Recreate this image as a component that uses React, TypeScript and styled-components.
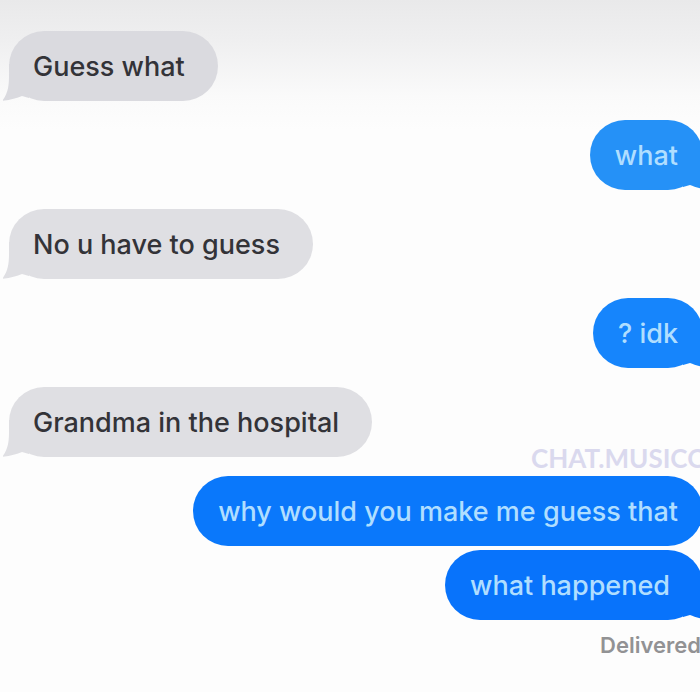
import React from "react";
import styled, { createGlobalStyle } from "styled-components";

const GlobalStyle = createGlobalStyle`
  body {
    margin: 0;
    background: #fdfdfd;
    font-family: Inter, "Liberation Sans", sans-serif;
  }
`;

type Side = "in" | "out";

const Screen = styled.main`
  position: relative;
  box-sizing: border-box;
  min-height: 100vh;
  padding-top: 31px;
  overflow: hidden;
  background: linear-gradient(#e9e9ea 0, #efeff0 40px, #fafafa 96px, #fdfdfd 130px);
`;

const Thread = styled.ol`
  display: flex;
  flex-direction: column;
  margin: 0 -3px 0 9px;
  padding: 0;
  list-style: none;
`;

const Row = styled.li<{ $side: Side; $grouped?: boolean }>`
  display: flex;
  justify-content: ${(p) => (p.$side === "in" ? "flex-start" : "flex-end")};
  margin-top: ${(p) => (p.$grouped ? 4 : 19)}px;

  &:first-child {
    margin-top: 0;
  }
`;

const Bubble = styled.div<{ $side: Side; $fill: string; $wide?: boolean }>`
  position: relative;
  box-sizing: border-box;
  height: 70px;
  padding-left: ${(p) => (p.$side === "in" ? 24 : 25)}px;
  padding-right: ${(p) => (p.$wide ? 33 : 25)}px;
  border-radius: 35px;
  color: ${(p) => (p.$side === "in" ? "#333338" : "#b0deff")};
  background: ${(p) => p.$fill};
  font-size: 27px;
  font-weight: 500;
  line-height: 72px;
  white-space: nowrap;
`;

const Text = styled.span`
  position: relative;
`;

const TailShape = styled.svg<{ $side: Side; $fill: string }>`
  position: absolute;
  bottom: -1px;
  left: ${(p) => (p.$side === "in" ? "-6px" : "auto")};
  right: ${(p) => (p.$side === "out" ? "-6px" : "auto")};
  transform: ${(p) => (p.$side === "out" ? "scaleX(-1)" : "none")};
  fill: ${(p) => p.$fill};
`;

const Status = styled.p`
  margin: 12px -1px 0 0;
  color: #929294;
  font-size: 22px;
  font-weight: 600;
  line-height: 26px;
  text-align: right;
`;

const Watermark = styled.span`
  position: absolute;
  top: 443px;
  left: calc(100% - 169px);
  color: #dad9ee;
  font-family: Lato, sans-serif;
  font-size: 26px;
  font-weight: 700;
  line-height: 30px;
  white-space: nowrap;
`;

function Tail({ side, fill }: { side: Side; fill: string }) {
  return (
    <TailShape $side={side} $fill={fill} width="26" height="40" viewBox="0 0 26 40" aria-hidden="true">
      <path d="M6 2C6 19 7 29 -1 39C7 38 14 36 19 34L26 36V2Z" />
    </TailShape>
  );
}

interface Message {
  text: string;
  side: Side;
  fill: string;
  tail?: boolean;
  grouped?: boolean;
  wide?: boolean;
}

const messages: Message[] = [
  { text: "Guess what", side: "in", fill: "#dadadf", tail: true, wide: true },
  { text: "what", side: "out", fill: "#2591f7", tail: true },
  { text: "No u have to guess", side: "in", fill: "#dfdfe3", tail: true, wide: true },
  { text: "? idk", side: "out", fill: "#1685fc", tail: true },
  { text: "Grandma in the hospital", side: "in", fill: "#dfdfe3", tail: true, wide: true },
  { text: "why would you make me guess that", side: "out", fill: "#0a78fb" },
  { text: "what happened", side: "out", fill: "#0873fb", tail: true, grouped: true, wide: true },
];

export default function App() {
  return (
    <>
      <GlobalStyle />
      <Screen>
        <Thread>
          {messages.map((m) => (
            <Row key={m.text} $side={m.side} $grouped={m.grouped}>
              <Bubble $side={m.side} $fill={m.fill} $wide={m.wide}>
                {m.tail && <Tail side={m.side} fill={m.fill} />}
                <Text>{m.text}</Text>
              </Bubble>
            </Row>
          ))}
        </Thread>
        <Status>Delivered</Status>
        <Watermark>CHAT.MUSICC</Watermark>
      </Screen>
    </>
  );
}
